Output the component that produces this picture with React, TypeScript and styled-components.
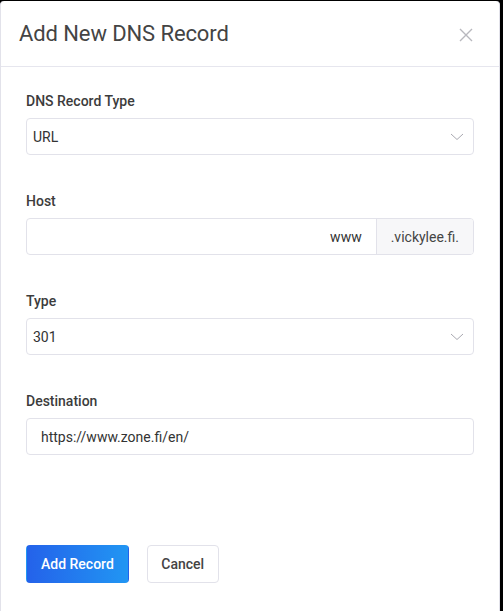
import React from "react";
import styled, { createGlobalStyle } from "styled-components";

const Global = createGlobalStyle`
  html, body { margin: 0; padding: 0; background: #000; }
  body { font-family: Roboto, "Liberation Sans", Arial, sans-serif; overflow: hidden; }
  * { box-sizing: border-box; }
`;

const Modal = styled.div`
  margin-top: 1px;
  width: 500px;
  height: 612px;
  background: #fff;
  border: 1px solid #e2e2ea;
  border-top: none;
  border-radius: 4px 4px 0 0;
  display: flex;
  flex-direction: column;
`;

const Header = styled.div`
  height: 66px;
  display: flex;
  align-items: center;
  justify-content: space-between;
  padding: 0 26px 0 18px;
  border-bottom: 1px solid #e6e6ee;
`;

const Title = styled.h2`
  margin: 0;
  font-size: 22px;
  font-weight: 400;
  color: #444;
  letter-spacing: -0.1px;
`;

const Close = styled.button`
  border: none;
  background: none;
  padding: 0;
  width: 14px;
  height: 14px;
  display: flex;
  margin-top: 2px;
`;

const Body = styled.div`
  padding: 25px 25px 0 25px;
  display: flex;
  flex-direction: column;
`;

const Group = styled.div`
  display: flex;
  flex-direction: column;
  margin-bottom: 37px;
`;

const Label = styled.label`
  font-size: 14px;
  line-height: 18px;
  font-weight: 500;
  color: #3c3c3c;
  margin-bottom: 8px;
`;

const Field = styled.div`
  height: 37px;
  border: 1px solid #e2e2ea;
  border-radius: 4px;
  display: flex;
  align-items: center;
  background: #fff;
  overflow: hidden;
`;

const Value = styled.span<{ $pad?: number; $right?: boolean }>`
  flex: 1;
  font-size: 14px;
  color: #333;
  padding: 0 ${(p) => (p.$right ? 14 : 0)}px 0 ${(p) => p.$pad ?? 6}px;
  text-align: ${(p) => (p.$right ? "right" : "left")};
`;

const Chevron = styled.svg`
  width: 14px;
  height: 8px;
  margin-right: 9px;
`;

const Addon = styled.span`
  height: 100%;
  display: flex;
  align-items: center;
  padding: 0 14px;
  background: #f7f7f9;
  border-left: 1px solid #e2e2ea;
  font-size: 14px;
  color: #444;
`;

const Actions = styled.div`
  display: flex;
  gap: 18px;
  margin-top: 53px;
`;

const Button = styled.button<{ $primary?: boolean }>`
  height: 38px;
  padding: 0 ${(p) => (p.$primary ? 14 : 13.5)}px;
  border-radius: 4px;
  font-family: inherit;
  font-size: 14px;
  font-weight: 500;
  border: 1px solid ${(p) => (p.$primary ? "transparent" : "#e2e2ea")};
  background: ${(p) =>
    p.$primary ? "linear-gradient(90deg, #2462ea 0%, #2196f3 100%)" : "#fff"};
  color: ${(p) => (p.$primary ? "#fff" : "#444")};
`;

const ChevronIcon = () => (
  <Chevron viewBox="0 0 14 8">
    <path d="M1 1 L7 6.5 L13 1" fill="none" stroke="#a8a8b0" strokeWidth="1" />
  </Chevron>
);

export default function App() {
  return (
    <>
      <Global />
      <Modal>
        <Header>
          <Title>Add New DNS Record</Title>
          <Close aria-label="close">
            <svg width="14" height="14" viewBox="0 0 14 14">
              <path d="M1 1 L13 13 M13 1 L1 13" stroke="#b8b8be" strokeWidth="1.4" />
            </svg>
          </Close>
        </Header>
        <Body>
          <Group>
            <Label>DNS Record Type</Label>
            <Field>
              <Value>URL</Value>
              <ChevronIcon />
            </Field>
          </Group>
          <Group>
            <Label>Host</Label>
            <Field>
              <Value $right>www</Value>
              <Addon>.vickylee.fi.</Addon>
            </Field>
          </Group>
          <Group>
            <Label>Type</Label>
            <Field>
              <Value>301</Value>
              <ChevronIcon />
            </Field>
          </Group>
          <Group>
            <Label>Destination</Label>
            <Field>
              <Value $pad={14}>https://www.zone.fi/en/</Value>
            </Field>
          </Group>
          <Actions>
            <Button $primary>Add Record</Button>
            <Button>Cancel</Button>
          </Actions>
        </Body>
      </Modal>
    </>
  );
}
